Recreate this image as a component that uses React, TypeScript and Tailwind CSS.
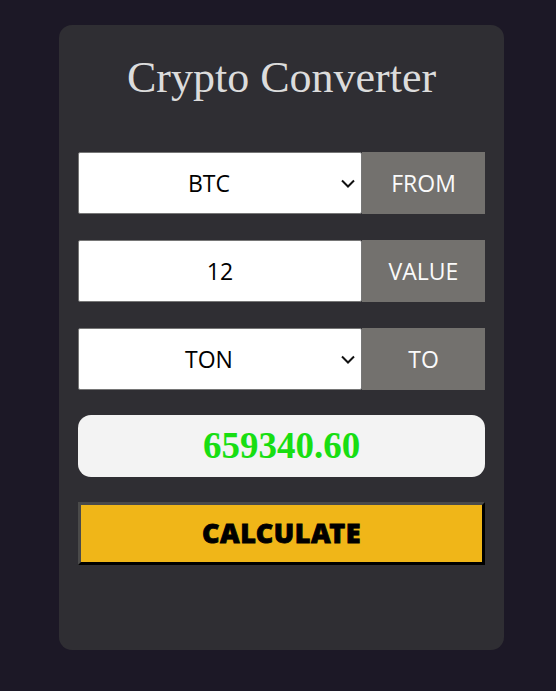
import { useState } from "react";

function Chevron() {
  return (
    <svg width="16" height="16" viewBox="0 0 16 16" className="pointer-events-none absolute right-[6px] top-1/2 -translate-y-1/2">
      <path d="M2 5.5 L8 11.5 L14 5.5" fill="none" stroke="#111" strokeWidth="2" />
    </svg>
  );
}

function Row({ label, children }: { label: string; children: React.ReactNode }) {
  return (
    <div className="flex h-[62px]">
      <div className="relative flex-1">{children}</div>
      <div className="flex w-[123px] items-center justify-center bg-[#73716e] text-[23px] text-[#fafafa]">
        {label}
      </div>
    </div>
  );
}

export default function App() {
  const [from, setFrom] = useState("BTC");
  const [to, setTo] = useState("TON");
  const [value, setValue] = useState("12");

  const field =
    "h-full w-full appearance-none rounded-[2px] border border-[#767676] bg-white text-center text-[23px] text-black outline-none";

  return (
    <div className="min-h-[691px] bg-[#1c1826] pt-[25px] font-['Open_Sans','Noto_Sans',sans-serif]">
      <div className="ml-[59px] flex h-[625px] w-[445px] flex-col rounded-[13px] bg-[#2f2e33] px-[19px]">
        <h1 className="mt-[27px] text-center font-['Liberation_Serif',serif] text-[44px] leading-[52px] text-[#dcdcdc]">
          Crypto Converter
        </h1>

        <div className="mt-[48px] flex flex-col gap-[26px]">
          <Row label="FROM">
            <select value={from} onChange={(e) => setFrom(e.target.value)} className={`${field} pr-[22px]`}>
              <option>BTC</option>
              <option>ETH</option>
              <option>TON</option>
            </select>
            <Chevron />
          </Row>
          <Row label="VALUE">
            <input value={value} onChange={(e) => setValue(e.target.value)} className={field} />
          </Row>
          <Row label="TO">
            <select value={to} onChange={(e) => setTo(e.target.value)} className={`${field} pr-[22px]`}>
              <option>BTC</option>
              <option>ETH</option>
              <option>TON</option>
            </select>
            <Chevron />
          </Row>
        </div>

        <div className="mt-[25px] flex h-[62px] items-center justify-center rounded-[13px] bg-[#f3f3f3] font-['Liberation_Serif',serif] text-[37px] font-bold text-[#18de12]">
          659340.60
        </div>

        <button className="mt-[25px] h-[63px] border-[3px] border-b-black border-l-[#4a4a4a] border-r-black border-t-[#4a4a4a] bg-[#f0b618] font-['Noto_Sans',sans-serif] text-[27px] font-black tracking-[0.5px] text-black [-webkit-text-stroke:0.8px_black]">
          CALCULATE
        </button>
      </div>
    </div>
  );
}
